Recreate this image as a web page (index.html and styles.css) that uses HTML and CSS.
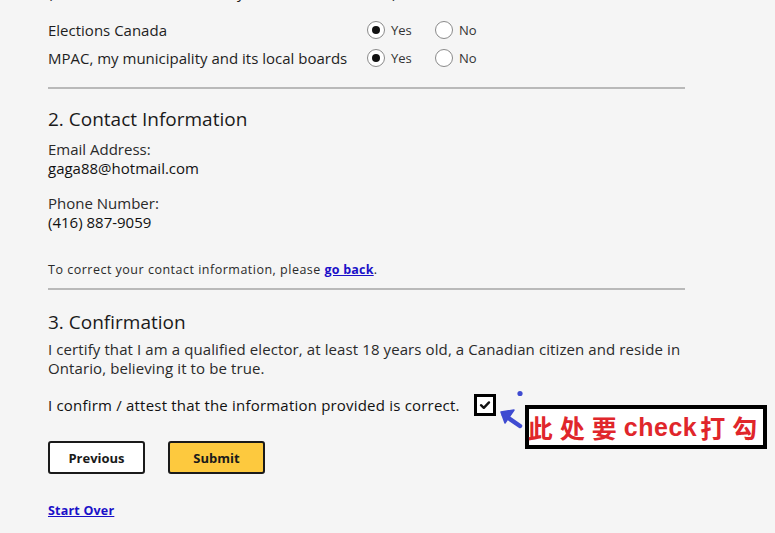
FILE: index.html
```html
<!DOCTYPE html>
<html lang="en">
<head>
<meta charset="utf-8">
<title>Review</title>
<link rel="stylesheet" href="styles.css">
</head>
<body>
<main class="page">
  <p class="cutoff">(Note, I consent to share my information with the)</p>

  <div class="consent">
    <div class="consent-label">Elections Canada</div>
    <div class="choices">
      <label class="choice"><span class="radio checked"></span>Yes</label>
      <label class="choice"><span class="radio"></span>No</label>
    </div>
    <div class="consent-label">MPAC, my municipality and its local boards</div>
    <div class="choices">
      <label class="choice"><span class="radio checked"></span>Yes</label>
      <label class="choice"><span class="radio"></span>No</label>
    </div>
  </div>

  <hr class="divider first">

  <h2 class="heading h-contact">2. Contact Information</h2>
  <div class="field">
    <div class="field-label">Email Address:</div>
    <div class="field-value">gaga88@hotmail.com</div>
  </div>
  <div class="field field-phone">
    <div class="field-label">Phone Number:</div>
    <div class="field-value">(416) 887-9059</div>
  </div>
  <p class="note">To correct your contact information, please <a href="#" class="link">go back</a>.</p>

  <hr class="divider second">

  <h2 class="heading h-confirm">3. Confirmation</h2>
  <p class="certify">I certify that I am a qualified elector, at least 18 years old, a Canadian citizen and reside in Ontario, believing it to be true.</p>

  <div class="confirm-row">
    <span class="confirm-text">I confirm / attest that the information provided is correct.</span>
    <span class="checkbox">
      <svg width="12" height="10" viewBox="0 0 12 10"><path d="M2 5.2 L4.8 7.8 L10 2.4" fill="none" stroke="#111" stroke-width="2.4" stroke-linecap="round" stroke-linejoin="round"/></svg>
    </span>
  </div>

  <div class="buttons">
    <button class="btn btn-prev">Previous</button>
    <button class="btn btn-submit">Submit</button>
  </div>

  <a href="#" class="link start-over">Start Over</a>

  <svg class="arrow" width="30" height="42" viewBox="0 0 30 42">
    <circle cx="23" cy="5.5" r="2.6" fill="#3f4bd1"/>
    <path d="M7 27 L23 38" stroke="#3f4bd1" stroke-width="4.5" stroke-linecap="round"/>
    <path d="M4 24 L17 22 L8 35 Z" fill="#3f4bd1" stroke="#3f4bd1" stroke-width="1.5" stroke-linejoin="round"/>
  </svg>

  <div class="annotation"><span class="cjk">此处要</span><span class="latin">check</span><span class="cjk">打勾</span></div>
</main>
</body>
</html>
```

FILE: styles.css
```css
html, body {
  margin: 0;
  padding: 0;
  background: #f5f5f5;
}

body {
  font-family: "Open Sans", "Liberation Sans", sans-serif;
  color: #1e1e1e;
  font-size: 15px;
  line-height: 19px;
  overflow: hidden;
  height: 533px;
}

.page {
  position: relative;
  display: flow-root;
  width: 637px;
  padding: 0 48px;
}

.cutoff {
  margin: -17px 0 0;
  white-space: nowrap;
}

.consent {
  display: grid;
  grid-template-columns: 319px auto;
  grid-auto-rows: 28px;
  align-items: center;
  margin-top: 14px;
}

.choices {
  display: flex;
  align-items: center;
}

.choice {
  display: flex;
  align-items: center;
  font-size: 13px;
  color: #333;
  width: 68px;
}

.radio {
  box-sizing: border-box;
  width: 18px;
  height: 18px;
  border: 1px solid #8a8a8a;
  border-radius: 50%;
  background: #fff;
  margin-right: 6px;
  display: flex;
  align-items: center;
  justify-content: center;
}

.radio.checked::after {
  content: "";
  width: 8px;
  height: 8px;
  border-radius: 50%;
  background: #111;
}

.divider {
  border: 0;
  height: 2px;
  background: #b9b9b9;
  margin: 0;
}

.divider.first { margin-top: 15px; }
.divider.second { margin-top: 10px; }

.heading {
  font-size: 19px;
  line-height: 24px;
  font-weight: 400;
  margin: 0;
  color: #1a1a1a;
}

.h-contact { margin-top: 18px; }
.h-confirm { margin-top: 20px; }

.field { margin-top: 9px; }
.field-phone { margin-top: 16px; }

.field-label { color: #2a2a2a; }
.field-value { color: #111; }

.note {
  font-size: 12.5px;
  line-height: 16px;
  letter-spacing: 0.5px;
  margin: 30px 0 0;
  color: #2a2a2a;
}

.note .link { letter-spacing: 0.2px; }

.link {
  color: #1a10c8;
  font-weight: 700;
  text-decoration: underline;
}

.certify {
  margin: 6px 0 0;
  color: #2a2a2a;
  letter-spacing: 0.1px;
}

.confirm-row {
  display: flex;
  align-items: center;
  height: 22px;
  margin-top: 16px;
}

.confirm-text {
  color: #111;
  letter-spacing: 0.2px;
}

.checkbox {
  box-sizing: border-box;
  width: 22px;
  height: 22px;
  border: 3px solid #000;
  background: #fff;
  margin-left: 14px;
  display: flex;
  align-items: center;
  justify-content: center;
}

.buttons {
  display: flex;
  gap: 23px;
  margin-top: 25px;
}

.btn {
  box-sizing: border-box;
  width: 97px;
  height: 33px;
  border: 2px solid #1a1a1a;
  border-radius: 3px;
  font-family: "Open Sans", "Liberation Sans", sans-serif;
  font-weight: 700;
  font-size: 13px;
  color: #1a1a1a;
  padding: 0;
}

.btn-prev { background: #fff; }
.btn-submit { background: #fdc93e; }

.start-over {
  display: inline-block;
  font-size: 12.5px;
  line-height: 17px;
  letter-spacing: 0.2px;
  margin-top: 28px;
}

.arrow {
  position: absolute;
  left: 497px;
  top: 388px;
}

.annotation {
  position: absolute;
  left: 525px;
  top: 405px;
  box-sizing: border-box;
  width: 242px;
  height: 44px;
  border: 4px solid #000;
  background: #fff;
  display: flex;
  align-items: center;
  justify-content: center;
  color: #e0262b;
  font-weight: 700;
  white-space: nowrap;
}

.cjk {
  font-family: "Noto Sans CJK SC", sans-serif;
  font-size: 25px;
  letter-spacing: 7px;
}

.latin {
  font-family: "Liberation Sans", Arial, sans-serif;
  font-size: 25px;
  letter-spacing: 0.5px;
  margin-right: 3px;
}
```
